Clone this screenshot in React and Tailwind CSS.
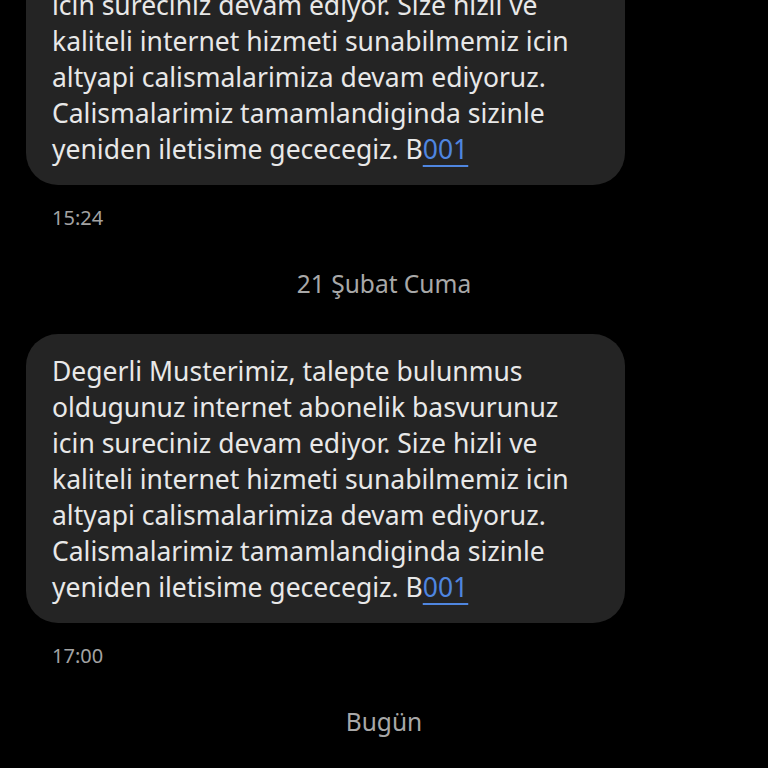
import React from "react";

const lines = [
  "Degerli Musterimiz, talepte bulunmus",
  "oldugunuz internet abonelik basvurunuz",
  "icin sureciniz devam ediyor. Size hizli ve",
  "kaliteli internet hizmeti sunabilmemiz icin",
  "altyapi calismalarimiza devam ediyoruz.",
  "Calismalarimiz tamamlandiginda sizinle",
];

function Bubble() {
  return (
    <div className="mx-[26px] w-[599px] rounded-[32px] bg-[#242424] pl-[26px] pr-[16px] pt-[19px] pb-[18px] text-[26.5px] leading-[36px] text-[#e8e8e8]">
      {lines.map((l) => (
        <div key={l} className="whitespace-nowrap">{l}</div>
      ))}
      <div className="whitespace-nowrap">
        yeniden iletisime gececegiz. B
        <span className="text-[#4f86e0] underline decoration-[2px] underline-offset-[6px]">001</span>
      </div>
    </div>
  );
}

function Time({ t }) {
  return (
    <div className="pl-[52px] pt-[21px] text-[20px] leading-[24px] text-[#a3a3a3]">{t}</div>
  );
}

function DateLabel({ d }) {
  return (
    <div className="mt-[41px] text-center text-[24.5px] leading-[26px] text-[#a8a8a8]">{d}</div>
  );
}

export default function App() {
  return (
    <div
      className="h-[768px] w-[768px] overflow-hidden bg-black"
      style={{ fontFamily: '"Noto Sans", "Open Sans", sans-serif' }}
    >
      <div className="-mt-[104px]">
        <Bubble />
        <Time t="15:24" />
        <DateLabel d="21 Şubat Cuma" />
        <div className="h-[37px]" />
        <Bubble />
        <Time t="17:00" />
        <DateLabel d="Bugün" />
      </div>
    </div>
  );
}
